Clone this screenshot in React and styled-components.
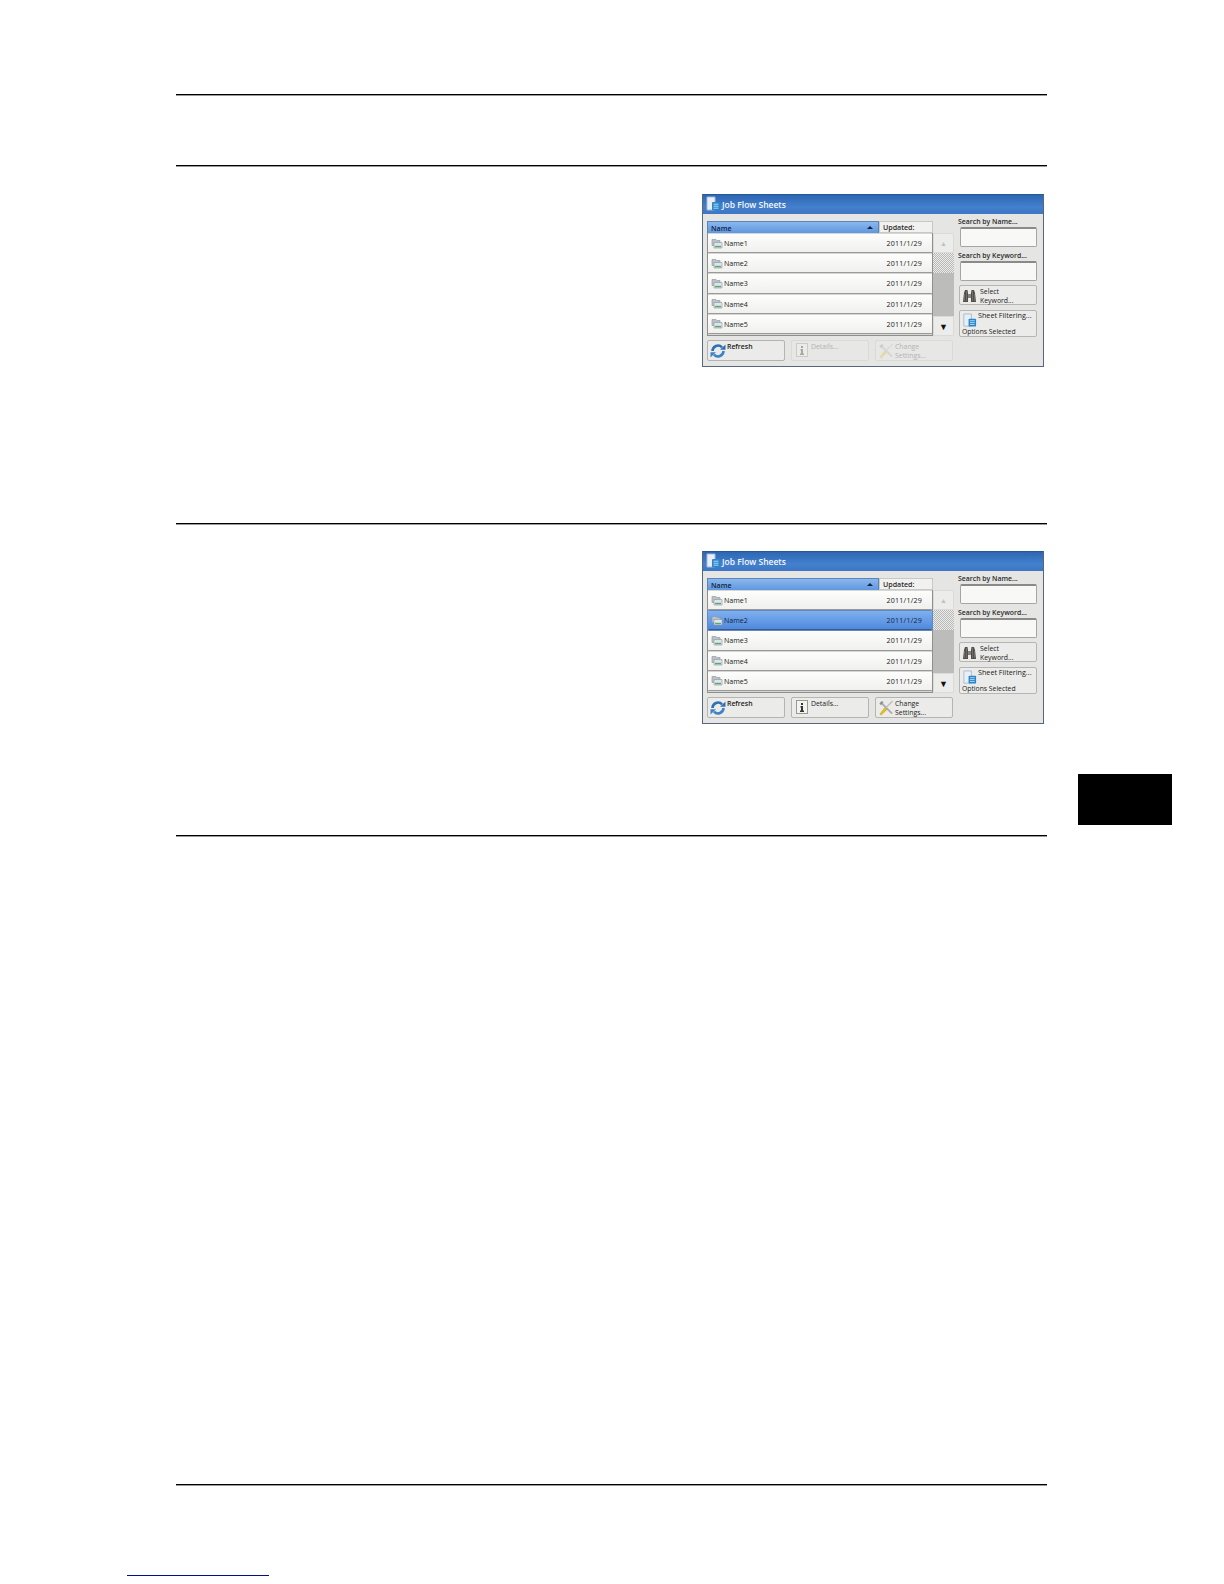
import React from "react";
import styled, { createGlobalStyle } from "styled-components";

const Global = createGlobalStyle`
  html, body { margin: 0; padding: 0; background: #fff; }
  #root { width: 1224px; height: 1584px; }
`;
const Page = styled.div`
  position: relative; width: 1224px; height: 1584px; background: #fff; overflow: hidden;
  font-family: "Open Sans", "Liberation Sans", sans-serif; color: #222;
  padding: 94px 176px 0 176px; box-sizing: border-box;
`;
const Rule = styled.hr`
  margin: 0; border: 0; height: 1px; background: #000; width: 871px; box-shadow: 0 1px 0 #999;
  margin-bottom: ${p => p.$gap}px;
`;
const Section = styled.section`
  width: 871px; height: ${p => p.$h}px; display: flex; justify-content: flex-end;
  padding: ${p => p.$top}px 3px 0 0; box-sizing: border-box;
`;
const Tab = styled.div`
  position: absolute; left: 1078px; top: 774px; width: 94px; height: 51px; background: #000;
`;
const LinkLine = styled.div`
  position: absolute; left: 127px; top: 1575px; width: 142px; height: 1px; background: #000f90;
`;
const Panel = styled.div`
  width: 342px; height: 173px; background: #e5e5e3; border: 1px solid #55677f; border-top: 0; box-sizing: border-box;
  display: flex; flex-direction: column;
`;
const TitleBar = styled.div`
  height: 20px; background: linear-gradient(#234f90 0, #2f68b4 8%, #4380cd 65%, #3d76c4); display: flex; align-items: center;
  gap: 1px; padding-left: 2px; color: #f4f8ff; font-size: 8.500px; font-weight: 600; flex: none;
`;
const Body = styled.div`
  display: grid; grid-template-columns: 251px 1fr; flex: 1; padding: 0 3px 0 4px; box-sizing: border-box;
`;
const Left = styled.div` display: flex; flex-direction: column; padding-top: 7px; `;
const ListWrap = styled.div` display: flex; `;
const TableCol = styled.div` width: 226px; `;
const Head = styled.div`
  height: 12px; display: grid; grid-template-columns: 172px 1fr; font-size: 7.100px; font-weight: 600; line-height: 10px;
`;
const HeadName = styled.div`
  background: linear-gradient(#8ab8ee, #5f97e0); border: 1px solid #5d84b8; border-bottom: 0; padding-left: 3px;
  display: flex; justify-content: space-between; align-items: center; padding-right: 5px; color: #14233c; box-sizing: border-box;
`;
const Caret = styled.span`
  width: 0; height: 0; border-left: 3.500px solid transparent; border-right: 3.500px solid transparent; border-bottom: 3.500px solid #14233c;
`;
const HeadDate = styled.div`
  background: #f1f1ef; border: 1px solid #c8c8c6; padding-left: 3px; color: #2b2b2b; box-sizing: border-box;
`;
const Rows = styled.div`
  display: flex; flex-direction: column; gap: 1px; padding: 1px 0 0 0; background: #d6d6d4;
  border-left: 1px solid #8f8f8d; border-bottom: 1px solid #8f8f8d; border-right: 1px solid #8f8f8d; box-sizing: border-box; height: 103px;
`;
const Row = styled.div`
  height: 19.200px; flex: none; border-radius: 1px; display: flex; align-items: center; padding: 0 10px 0 3px; gap: 1px;
  font-size: 7.100px; box-sizing: border-box; color: ${p => p.$sel ? "#14233c" : "#222"}; font-weight: 500;
  border-bottom: 1.500px solid ${p => p.$sel ? "#3f5a82" : "#9a9a98"};
  background: ${p => p.$sel ? "linear-gradient(#7fb0ee, #4f8ae0)" : "linear-gradient(#fdfdfc, #f0f0ee)"};
  box-shadow: ${p => p.$sel ? "0 0 0 1px #6289bf" : "none"};
`;
const RowName = styled.span` flex: 1; `;
const RowDate = styled.span` letter-spacing: .2px; `;
const Scroll = styled.div`
  width: 21px; margin-top: 12px; display: flex; flex-direction: column; height: 103px;
`;
const ScrollBtn = styled.div`
  height: 20px; flex: none; background: #ececea; border: 1px solid #dadad8; border-radius: 1px; display: flex; align-items: center; justify-content: center;
  font-size: ${p => p.$off ? 7 : 9}px; color: ${p => p.$off ? "#c2c2c0" : "#111"}; box-sizing: border-box;
`;
const Thumb = styled.div`
  height: 20px; flex: none; background-color: #dcdcda;
  background-image: conic-gradient(#b8b8b6 25%, #ececea 0 50%, #b8b8b6 0 75%, #ececea 0);
  background-size: 2px 2px;
`;
const Track = styled.div` flex: 1; background: #bcbcba; `;
const Actions = styled.div` display: flex; gap: 6px; padding-top: 4px; `;
const Action = styled.div`
  width: 78px; height: 21px; border: 1px solid ${p => p.$off ? "#dadad8" : "#b4b4b2"}; border-radius: 2px; box-sizing: border-box;
  display: flex; gap: 1px; padding: 0 2px; font-size: 6.900px; line-height: 8.500px;
  color: ${p => p.$off ? "#b4b4b2" : "#222"}; font-weight: ${p => p.$bold ? 600 : 500};
  background: ${p => p.$off ? "#e7e7e5" : "#ebebe9"};
`;
const ActionText = styled.span` padding-top: 2px; white-space: nowrap; `;
const Side = styled.div` display: flex; flex-direction: column; padding-top: 3px; `;
const SearchLabel = styled.div` font-size: 6.900px; font-weight: 600; line-height: 9px; color: #2b2b2b; white-space: nowrap; `;
const SearchBox = styled.div`
  height: 19.500px; margin: 1px 0 4.500px 2px; width: 77px; background: #f8f8f6;
  border: 1px solid #a5a5a3; border-top: 2px solid #8a8a88; border-radius: 2px; box-sizing: border-box;
`;
const SideBtn = styled.div`
  width: 78px; margin-left: 1px; height: ${p => p.$h}px; margin-bottom: 5px; border: 1px solid #b5b5b3; border-radius: 2px; box-sizing: border-box;
  background: #ebebe9; display: flex; gap: 1px; padding: 0 2px; font-size: 6.900px; line-height: 8.500px; color: #222; font-weight: 500; position: relative;
`;
const FilterText = styled.span` font-size: 7.200px; white-space: nowrap; `;
const Options = styled.span` position: absolute; left: 2px; bottom: 0; font-size: 6.800px; white-space: nowrap; `;

const SheetIcon = ({ s = 12 }) => (
  <svg width={s} height={s} viewBox="0 0 16 16" style={{ flex: "none", marginTop: s === 15 ? 2 : 0 }}>
    <path d="M2 1h8v13H2z" fill="#e9eff7" stroke="#a9bbd0" />
    <rect x="7" y="6" width="8" height="8.500" rx="1" fill="#2a86cc" />
    <path d="M8.500 8.200h5M8.500 10.200h5M8.500 12.200h5" stroke="#cfe9ff" strokeWidth=".8" />
  </svg>
);
const FolderIcon = () => (
  <svg width="12" height="11" viewBox="0 0 12 11" style={{ flex: "none" }}>
    <path d="M1 1.500h4l1 1h3v5H1z" fill="#b9c2c8" stroke="#8a959c" strokeWidth=".6" />
    <path d="M3 4.500h8v5.500H3z" fill="#dfe6ea" stroke="#8a959c" strokeWidth=".6" />
    <path d="M4 7.800h6v1.500H4z" fill="#5aa872" />
  </svg>
);
const RefreshIcon = () => (
  <svg width="16" height="16" viewBox="0 0 16 16" style={{ flex: "none", marginTop: 2 }}>
    <path d="M2.500 8A5.500 5.500 0 0 1 12 4.300" fill="none" stroke="#2f6fb8" strokeWidth="2.600" />
    <path d="M13.500 8A5.500 5.500 0 0 1 4 11.700" fill="none" stroke="#3d82c8" strokeWidth="2.600" />
    <path d="M10 6.800h5.500V1.500z" fill="#2f6fb8" />
    <path d="M6 9.200H.5v5.300z" fill="#3d82c8" />
  </svg>
);
const InfoIcon = ({ off }) => (
  <svg width="13" height="15" viewBox="0 0 13 15" style={{ flex: "none", margin: "2px 1px 0 2px", opacity: off ? .35 : 1 }}>
    <rect x=".5" y=".5" width="11" height="13" fill="#f4f4ee" stroke="#9a9a94" />
    <path d="M5 3h2v2H5zM4.500 6H7v4.500h1V12H4v-1.500h1V7.500h-.5z" fill="#333" />
  </svg>
);
const ToolsIcon = ({ off }) => (
  <svg width="16" height="17" viewBox="0 0 17 17" style={{ flex: "none", marginTop: 1, opacity: off ? .3 : 1 }}>
    <path d="M3.500 3.500L15 15" stroke="#a7acb0" strokeWidth="2" />
    <path d="M1.500 4L4 1.500 6 3 3 6z" fill="#8d9296" />
    <path d="M15.500 1.500L7 10" stroke="#bcc0c4" strokeWidth="1.600" />
    <path d="M2 15.500l5.500-7 2 2-6 6z" fill="#e8c020" stroke="#b89410" strokeWidth=".5" />
  </svg>
);
const BinocularsIcon = () => (
  <svg width="15" height="14" viewBox="0 0 15 14" style={{ flex: "none", marginTop: 3, marginRight: 2 }}>
    <path d="M1 13l1-9 1-3h2.500l.5 3v9zM9 13V4l.5-3H12l1 3 1 9z" fill="#4f4e48" />
    <path d="M6 5h3v4H6z" fill="#85847e" />
    <path d="M2.500 5v7M4.500 2v10M10.500 2v10M12.500 5v7" stroke="#8e8d87" strokeWidth=".5" />
  </svg>
);

const Screen = ({ selected, enabled }) => (
  <Panel>
    <TitleBar><SheetIcon s={16} />Job Flow Sheets</TitleBar>
    <Body>
      <Left>
        <ListWrap>
          <TableCol>
            <Head>
              <HeadName>Name<Caret /></HeadName>
              <HeadDate>Updated:</HeadDate>
            </Head>
            <Rows>
              {[1, 2, 3, 4, 5].map(n => (
                <Row key={n} $sel={selected === n}>
                  <FolderIcon />
                  <RowName>Name{n}</RowName>
                  <RowDate>2011/1/29</RowDate>
                </Row>
              ))}
            </Rows>
          </TableCol>
          <Scroll>
            <ScrollBtn $off>▲</ScrollBtn>
            <Thumb />
            <Track />
            <ScrollBtn>▼</ScrollBtn>
          </Scroll>
        </ListWrap>
        <Actions>
          <Action $bold><RefreshIcon /><ActionText>Refresh</ActionText></Action>
          <Action $off={!enabled}><InfoIcon off={!enabled} /><ActionText>Details...</ActionText></Action>
          <Action $off={!enabled}><ToolsIcon off={!enabled} /><ActionText>Change<br />Settings...</ActionText></Action>
        </Actions>
      </Left>
      <Side>
        <SearchLabel>Search by Name...</SearchLabel>
        <SearchBox />
        <SearchLabel>Search by Keyword...</SearchLabel>
        <SearchBox />
        <SideBtn $h={20}><BinocularsIcon /><ActionText>Select<br />Keyword...</ActionText></SideBtn>
        <SideBtn $h={27}><SheetIcon s={15} /><FilterText>Sheet Filtering...</FilterText><Options>Options Selected</Options></SideBtn>
      </Side>
    </Body>
  </Panel>
);

export default function App() {
  return (
    <Page>
      <Global />
      <Rule $gap={70} />
      <Rule $gap={0} />
      <Section $h={357} $top={28}><Screen enabled={false} /></Section>
      <Rule $gap={0} />
      <Section $h={311} $top={27}><Screen selected={2} enabled /></Section>
      <Rule $gap={648} />
      <Rule $gap={0} />
      <Tab />
      <LinkLine />
    </Page>
  );
}
